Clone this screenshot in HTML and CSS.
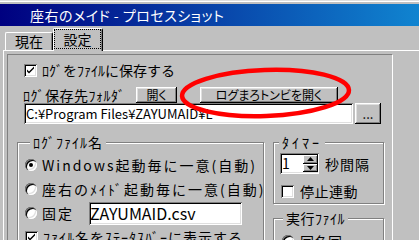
FILE: index.html
```html
<!DOCTYPE html>
<html lang="ja">
<head>
  <meta charset="UTF-8">
  <title>座右のメイド - プロセスショット</title>
  <link rel="stylesheet" href="styles.css">
</head>
<body>
<div class="window">
  <div class="titlebar">座右のメイド - プロセスショット</div>

  <div class="tabs">
    <div class="tab">現在</div>
    <div class="tab active"><span class="focus">設定</span></div>
  </div>

  <div class="tab-body">
    <div class="page">
      <div class="check-row">
        <span class="check"><svg viewBox="0 0 13 13"><path d="M3 5.5l2 2 5-5v2l-5 5-2-2z"/></svg></span>
        ﾛｸﾞをﾌｧｲﾙに保存する
      </div>

      <div class="folder-row">
        <span class="folder-label">ﾛｸﾞ保存先ﾌｫﾙﾀﾞ</span>
        <button class="btn btn-open">開く</button>
        <button class="btn btn-maro">ログまろトンビを開く</button>
      </div>

      <div class="path-row">
        <div class="field path">C:¥Program Files¥ZAYUMAID¥L</div>
        <button class="btn btn-dots">...</button>
      </div>

      <div class="lower">
        <fieldset class="group group-file">
          <legend>ﾛｸﾞﾌｧｲﾙ名</legend>
          <div class="opt"><span class="radio on"></span>Windows起動毎に一意(自動)</div>
          <div class="opt"><span class="radio"></span>座右のﾒｲﾄﾞ起動毎に一意(自動)</div>
          <div class="opt">
            <span class="radio"></span><span class="fixed">固定</span>
            <div class="field name">ZAYUMAID.csv</div>
          </div>
          <div class="opt status">
            <span class="check"><svg viewBox="0 0 13 13"><path d="M3 5.5l2 2 5-5v2l-5 5-2-2z"/></svg></span>
            ﾌｧｲﾙ名をｽﾃｰﾀｽﾊﾞｰに表示する
          </div>
        </fieldset>

        <div class="side">
          <fieldset class="group group-timer">
            <legend>ﾀｲﾏｰ</legend>
            <div class="spin-row">
              <div class="spin">
                <span class="spin-value">1</span>
                <span class="spin-btns">
                  <span class="spin-btn"><svg viewBox="0 0 7 4"><path d="M3.5 0L7 4H0z"/></svg></span>
                  <span class="spin-btn"><svg viewBox="0 0 7 4"><path d="M0 0h7L3.5 4z"/></svg></span>
                </span>
              </div>
              <span class="unit">秒間隔</span>
            </div>
            <div class="opt stop"><span class="check"></span>停止連動</div>
          </fieldset>

          <fieldset class="group group-exec">
            <legend>実行ﾌｧｲﾙ</legend>
            <div class="opt"><span class="radio"></span>同名同一</div>
          </fieldset>
        </div>
      </div>
    </div>
  </div>
</div>

<svg class="mark" width="419" height="240" viewBox="0 0 419 240">
  <ellipse cx="265.5" cy="93" rx="83.5" ry="23" transform="rotate(-2 265.5 93)"/>
</svg>
</body>
</html>
```

FILE: styles.css
```css
html, body {
  margin: 0;
  padding: 0;
}
body {
  position: relative;
  width: 419px;
  height: 240px;
  overflow: hidden;
  background: #c0c0c0;
  color: #000;
  font-family: "Noto Sans CJK JP", "Noto Sans", sans-serif;
  font-size: 14px;
  line-height: 16px;
}
.window {
  padding-top: 3px;
  border-top: 1px solid #dfdfdf;
  box-shadow: inset 0 1px #fff;
}
.titlebar {
  height: 22px;
  line-height: 22px;
  padding-left: 30px;
  color: #fff;
  white-space: nowrap;
  letter-spacing: 0.5px;
  background: linear-gradient(to right, #000080, #1084d0);
  font-feature-settings: "palt";
}

/* tabs */
.tabs {
  display: flex;
  align-items: flex-end;
  height: 24px;
  padding-left: 5px;
}
.tab {
  box-sizing: border-box;
  width: 48px;
  height: 18px;
  line-height: 17px;
  text-align: center;
  border-top: 1px solid #fff;
  border-left: 1px solid #fff;
  border-right: 1px solid #000;
  border-radius: 2px 2px 0 0;
  box-shadow: inset -1px 0 #808080;
}
.tab.active {
  position: relative;
  z-index: 1;
  width: 50px;
  height: 23px;
  margin-bottom: -1px;
  background: #c0c0c0;
}
.focus {
  display: block;
  box-sizing: border-box;
  width: 47px;
  height: 20px;
  line-height: 18px;
  border: 1px dotted #000;
}
.tab-body {
  margin-left: 3px;
  padding: 3px 0 0 3px;
  border-top: 1px solid #fff;
  border-left: 1px solid #fff;
}
.page {
  width: 384px;
  height: 200px;
  padding-top: 5px;
  border-top: 1px solid #808080;
  border-left: 1px solid #808080;
  border-right: 1px solid #fff;
}

/* controls */
.check {
  flex: none;
  box-sizing: border-box;
  width: 13px;
  height: 13px;
  margin-right: 5px;
  background: #fff;
  box-shadow: inset 1px 1px #808080, inset -1px -1px #fff, inset 2px 2px #000, inset -2px -2px #dfdfdf;
}
.check svg {
  display: block;
  width: 13px;
  height: 13px;
}
.radio {
  flex: none;
  position: relative;
  box-sizing: border-box;
  width: 12px;
  height: 12px;
  margin-right: 5px;
  border-radius: 50%;
  background: #fff;
  box-shadow: inset 1px 1px #808080, inset 2px 2px #000, inset -1px -1px #fff, inset -2px -2px #dfdfdf;
}
.radio.on::after {
  content: "";
  position: absolute;
  left: 4px;
  top: 4px;
  width: 4px;
  height: 4px;
  border-radius: 50%;
  background: #000;
}
.btn {
  box-sizing: border-box;
  height: 16px;
  padding: 0;
  border: none;
  background: #c0c0c0;
  color: #000;
  font-family: inherit;
  font-size: 12px;
  line-height: 14px;
  font-feature-settings: "palt";
  box-shadow: inset -1px -1px #000, inset 1px 1px #fff, inset -2px -2px #808080, inset 2px 2px #dfdfdf;
}
.field {
  box-sizing: border-box;
  padding-left: 2px;
  background: #fff;
  white-space: nowrap;
  overflow: hidden;
  box-shadow: inset 1px 1px #808080, inset -1px -1px #fff, inset 2px 2px #000, inset -2px -2px #dfdfdf;
}

.check-row {
  display: flex;
  align-items: center;
  height: 20px;
  padding-left: 16px;
}
.folder-row {
  display: flex;
  align-items: center;
  height: 17px;
  margin-top: 6px;
  padding-left: 15px;
}
.folder-label {
  flex: 0 0 113px;
  letter-spacing: 0.5px;
}
.btn-open {
  width: 41px;
}
.btn-maro {
  width: 138px;
  margin-left: 23px;
}
.path-row {
  display: flex;
  gap: 2px;
  padding-left: 16px;
}
.path {
  width: 329px;
  height: 21px;
  font-size: 13px;
  line-height: 21px;
}
.btn-dots {
  width: 26px;
  height: 21px;
  font-size: 13px;
  line-height: 18px;
}

/* group boxes */
.lower {
  display: flex;
  gap: 9px;
  margin-top: 10px;
  padding-left: 9px;
}
.group {
  box-sizing: border-box;
  min-width: 0;
  margin: 0;
  padding: 3px 0 0;
  border: 1px solid #808080;
  box-shadow: inset 1px 1px #fff, 1px 1px #fff;
}
.group legend {
  padding: 0 3px;
  line-height: 16px;
  background: #c0c0c0;
}
.group-file {
  width: 247px;
  height: 140px;
  padding-left: 7px;
}
.group-file legend {
  margin-left: 5px;
  letter-spacing: 1px;
}
.opt {
  display: flex;
  align-items: center;
  height: 24px;
  white-space: nowrap;
}
.group-file .opt {
  letter-spacing: 2px;
}
.group-file .status {
  letter-spacing: 1px;
}
.fixed {
  width: 47px;
}
.name {
  width: 153px;
  height: 23px;
  padding-left: 1px;
  font-size: 16px;
  line-height: 23px;
  letter-spacing: 0;
}
.side {
  display: flex;
  flex-direction: column;
  gap: 6px;
  width: 111px;
}
.group-timer {
  padding: 3px 0 2px 6px;
}
.group-timer legend {
  margin-left: -1px;
  letter-spacing: 3px;
}
.spin-row {
  display: flex;
  align-items: center;
  height: 21px;
}
.spin {
  display: flex;
  box-sizing: border-box;
  width: 39px;
  height: 21px;
  padding: 2px 1px 2px 2px;
  background: #fff;
  box-shadow: inset 1px 1px #808080, inset -1px -1px #fff, inset 2px 2px #000, inset -2px -2px #dfdfdf;
}
.spin-value {
  flex: 1;
  line-height: 17px;
}
.spin-btns {
  display: flex;
  flex-direction: column;
  width: 15px;
}
.spin-btn {
  display: flex;
  align-items: center;
  justify-content: center;
  flex: 1;
  background: #c0c0c0;
  box-shadow: inset -1px -1px #000, inset 1px 1px #fff, inset -2px -2px #808080;
}
.spin-btn svg {
  width: 7px;
  height: 4px;
}
.unit {
  margin-left: 6px;
  letter-spacing: 1px;
}
.stop {
  height: 20px;
  margin-top: 7px;
  margin-left: 1px;
  letter-spacing: 0.5px;
}
.stop .check {
  margin-right: 6px;
}
.group-exec {
  height: 60px;
  padding-left: 8px;
}
.group-exec legend {
  margin-left: 1px;
  letter-spacing: 0.5px;
}
.group-exec .radio {
  margin-right: 6px;
}

.mark {
  position: absolute;
  left: 0;
  top: 0;
  pointer-events: none;
}
.mark ellipse {
  fill: none;
  stroke: #ff0000;
  stroke-width: 4.5;
}
```
